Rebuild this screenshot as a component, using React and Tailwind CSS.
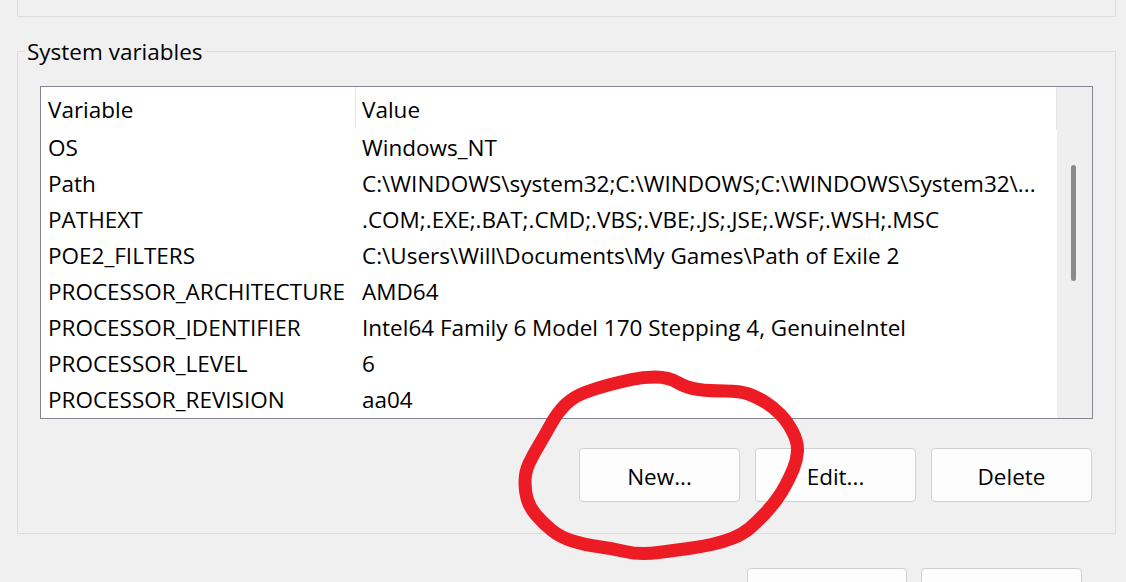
import React from "react";

const rows = [
  ["OS", "Windows_NT"],
  ["Path", "C:\\WINDOWS\\system32;C:\\WINDOWS;C:\\WINDOWS\\System32\\..."],
  ["PATHEXT", ".COM;.EXE;.BAT;.CMD;.VBS;.VBE;.JS;.JSE;.WSF;.WSH;.MSC"],
  ["POE2_FILTERS", "C:\\Users\\Will\\Documents\\My Games\\Path of Exile 2"],
  ["PROCESSOR_ARCHITECTURE", "AMD64"],
  ["PROCESSOR_IDENTIFIER", "Intel64 Family 6 Model 170 Stepping 4, GenuineIntel"],
  ["PROCESSOR_LEVEL", "6"],
  ["PROCESSOR_REVISION", "aa04"],
];

const circlePts = [
  [557, 413], [573, 397], [597, 388], [620, 382], [643, 377], [668, 377],
  [687, 388], [710, 391], [740, 391], [757, 397], [773, 407], [787, 421],
  [798, 442], [797, 460], [790, 477], [782, 492], [772, 506], [757, 522],
  [743, 534], [723, 542], [700, 547], [677, 550], [640, 555], [610, 548],
  [585, 545], [560, 537], [543, 523], [530, 508], [525, 492], [525, 472],
  [533, 455], [545, 435],
];

function smoothPath(pts) {
  const n = pts.length;
  const mid = (a, b) => [(a[0] + b[0]) / 2, (a[1] + b[1]) / 2];
  let d = "";
  const m0 = mid(pts[n - 1], pts[0]);
  d += `M${m0[0]},${m0[1]}`;
  for (let i = 0; i < n; i++) {
    const p = pts[i];
    const m = mid(p, pts[(i + 1) % n]);
    d += ` Q${p[0]},${p[1]} ${m[0]},${m[1]}`;
  }
  return d + " Z";
}

function Button({ children }) {
  return (
    <div className="w-[161px] h-[54px] pt-[3px] flex items-center justify-center rounded-[4px] border border-[#d0d0d0] bg-[#fdfdfd] text-black">
      {children}
    </div>
  );
}

export default function App() {
  return (
    <div
      className="relative w-[1126px] h-[582px] overflow-hidden bg-[#f0f0f0] text-[22.5px] text-black"
      style={{ fontFamily: '"Open Sans", "Noto Sans", sans-serif' }}
    >
      {/* top group box (bottom edge only visible) */}
      <div className="ml-[17px] w-[1099px] h-[17px] border-x border-b border-[#dcdcdc]" />

      {/* System variables group */}
      <div className="ml-[17px] mt-[34px] w-[1099px] h-[483px] border border-[#dcdcdc]">
        <div className="ml-[7px] -mt-[14px] h-[28px] w-fit px-[2px] bg-[#f0f0f0] leading-[28px]">
          System variables
        </div>

        {/* list box */}
        <div className="ml-[22px] mt-[20px] w-[1053px] h-[333px] border border-[#828790] bg-white flex overflow-hidden">
          <div className="w-[1016px] flex flex-col overflow-hidden">
            <div className="h-[43px] shrink-0 flex border-r border-[#e5e5e5]">
              <div className="w-[315px] pl-[7px] pt-[6px] border-r border-[#e5e5e5] h-[41px]">Variable</div>
              <div className="pl-[6px] pt-[6px]">Value</div>
            </div>
            {rows.map(([k, v]) => (
              <div key={k} className="h-[36px] shrink-0 flex items-center whitespace-nowrap">
                <div className="w-[315px] pl-[7px]">{k}</div>
                <div className="pl-[6px]">{v}</div>
              </div>
            ))}
          </div>
          <div className="w-[35px] bg-[#efefef] pt-[78px] pl-[14px]">
            <div className="w-[5px] h-[116px] rounded-full bg-[#8a8a8a]" />
          </div>
        </div>

        {/* buttons */}
        <div className="mt-[29px] flex justify-end gap-[15px] pr-[23px]">
          <Button>New...</Button>
          <Button>Edit...</Button>
          <Button>Delete</Button>
        </div>
      </div>

      {/* dialog OK / Cancel buttons (top edge visible) */}
      <div className="mt-[34px] flex justify-end gap-[14px] pr-[44px]">
        <div className="w-[160px] h-[54px] rounded-[4px] border border-[#d0d0d0] bg-[#fdfdfd]" />
        <div className="w-[161px] h-[54px] rounded-[4px] border border-[#d0d0d0] bg-[#fdfdfd]" />
      </div>

      {/* red hand-drawn circle annotation */}
      <svg className="absolute inset-0 pointer-events-none" width="1126" height="582">
        <path
          d={smoothPath(circlePts)}
          fill="none"
          stroke="#ed1c24"
          strokeWidth="13"
          strokeLinejoin="round"
          strokeLinecap="round"
        />
      </svg>
    </div>
  );
}
